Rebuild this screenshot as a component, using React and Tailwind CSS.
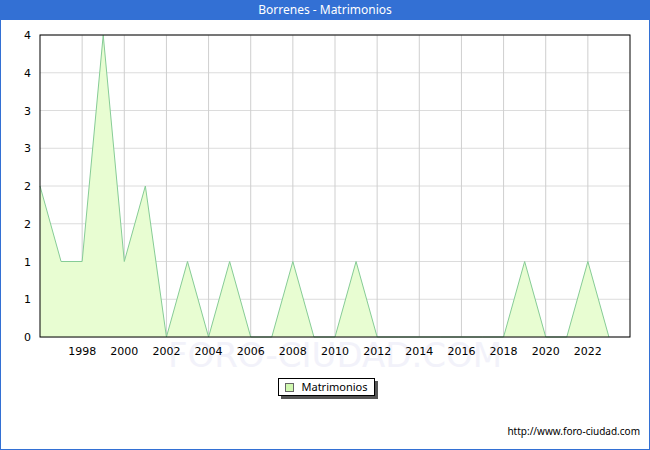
import React from 'react';

const data = [2, 1, 1, 4, 1, 2, 0, 1, 0, 1, 0, 0, 1, 0, 0, 1, 0, 0, 0, 0, 0, 0, 0, 1, 0, 0, 1, 0];
const X0 = 40, X1 = 630, Y0 = 337, Y1 = 35;
const sx = (i) => X0 + i * ((X1 - X0) / 28);
const sy = (v) => Y0 - v * ((Y0 - Y1) / 4);
const yLabels = ['0', '1', '1', '2', '2', '3', '3', '4', '4'];

export default function App() {
    const pts = data.map((v, i) => `${sx(i)},${sy(v)}`).join(' ');
    const area = `${sx(0)},${Y0} ${pts} ${sx(data.length - 1)},${Y0}`;
    return (
        <div className="w-[650px] h-[450px] border border-[#3370d4] border-t-0 bg-white flex flex-col font-['DejaVu_Sans'] text-[11px] text-black">
            <div className="h-[20px] bg-[#3370d4] text-white text-[12px] flex items-center justify-center">
                Borrenes - Matrimonios
            </div>
            <svg width="648" height="352" viewBox="1 20 648 352" className="block" fontFamily="'DejaVu Sans', sans-serif">
                <text x="335" y="367" textAnchor="middle" fontSize="34" fill="#f2f2fa">FORO-CIUDAD.COM</text>
                {yLabels.map((l, k) => {
                    const y = Y0 - k * ((Y0 - Y1) / 8);
                    return (
                        <g key={k}>
                            <line x1={X0} x2={X1} y1={y} y2={y} stroke="#dcdcdc" />
                            <text x="31" y={y + 4} textAnchor="end" fontSize="11">{l}</text>
                        </g>
                    );
                })}
                {Array.from({ length: 13 }, (_, k) => {
                    const i = 2 + k * 2;
                    return (
                        <g key={i}>
                            <line x1={sx(i)} x2={sx(i)} y1={Y1} y2={Y0} stroke="#cfcfcf" />
                            <text x={sx(i)} y="355" textAnchor="middle" fontSize="11">{1996 + i}</text>
                        </g>
                    );
                })}
                <polygon points={area} fill="#e8fdd2" />
                <polyline points={pts} fill="none" stroke="#86cc96" strokeWidth="1" />
                <rect x={X0} y={Y1} width={X1 - X0} height={Y0 - Y1} fill="none" stroke="#000" />
            </svg>
            <div className="flex justify-center mt-[6px]">
                <div className="ml-[2px] flex items-center gap-[8px] border border-black px-[6px] h-[18px] shadow-[3px_3px_0_#555]">
                    <span className="w-[9px] h-[9px] border border-[#666] bg-[#d0f8b0]" />
                    <span>Matrimonios</span>
                </div>
            </div>
            <div className="flex-1" />
            <div className="text-right pr-[9px] pb-[10px] text-[10px]">http://www.foro-ciudad.com</div>
        </div>
    );
}
